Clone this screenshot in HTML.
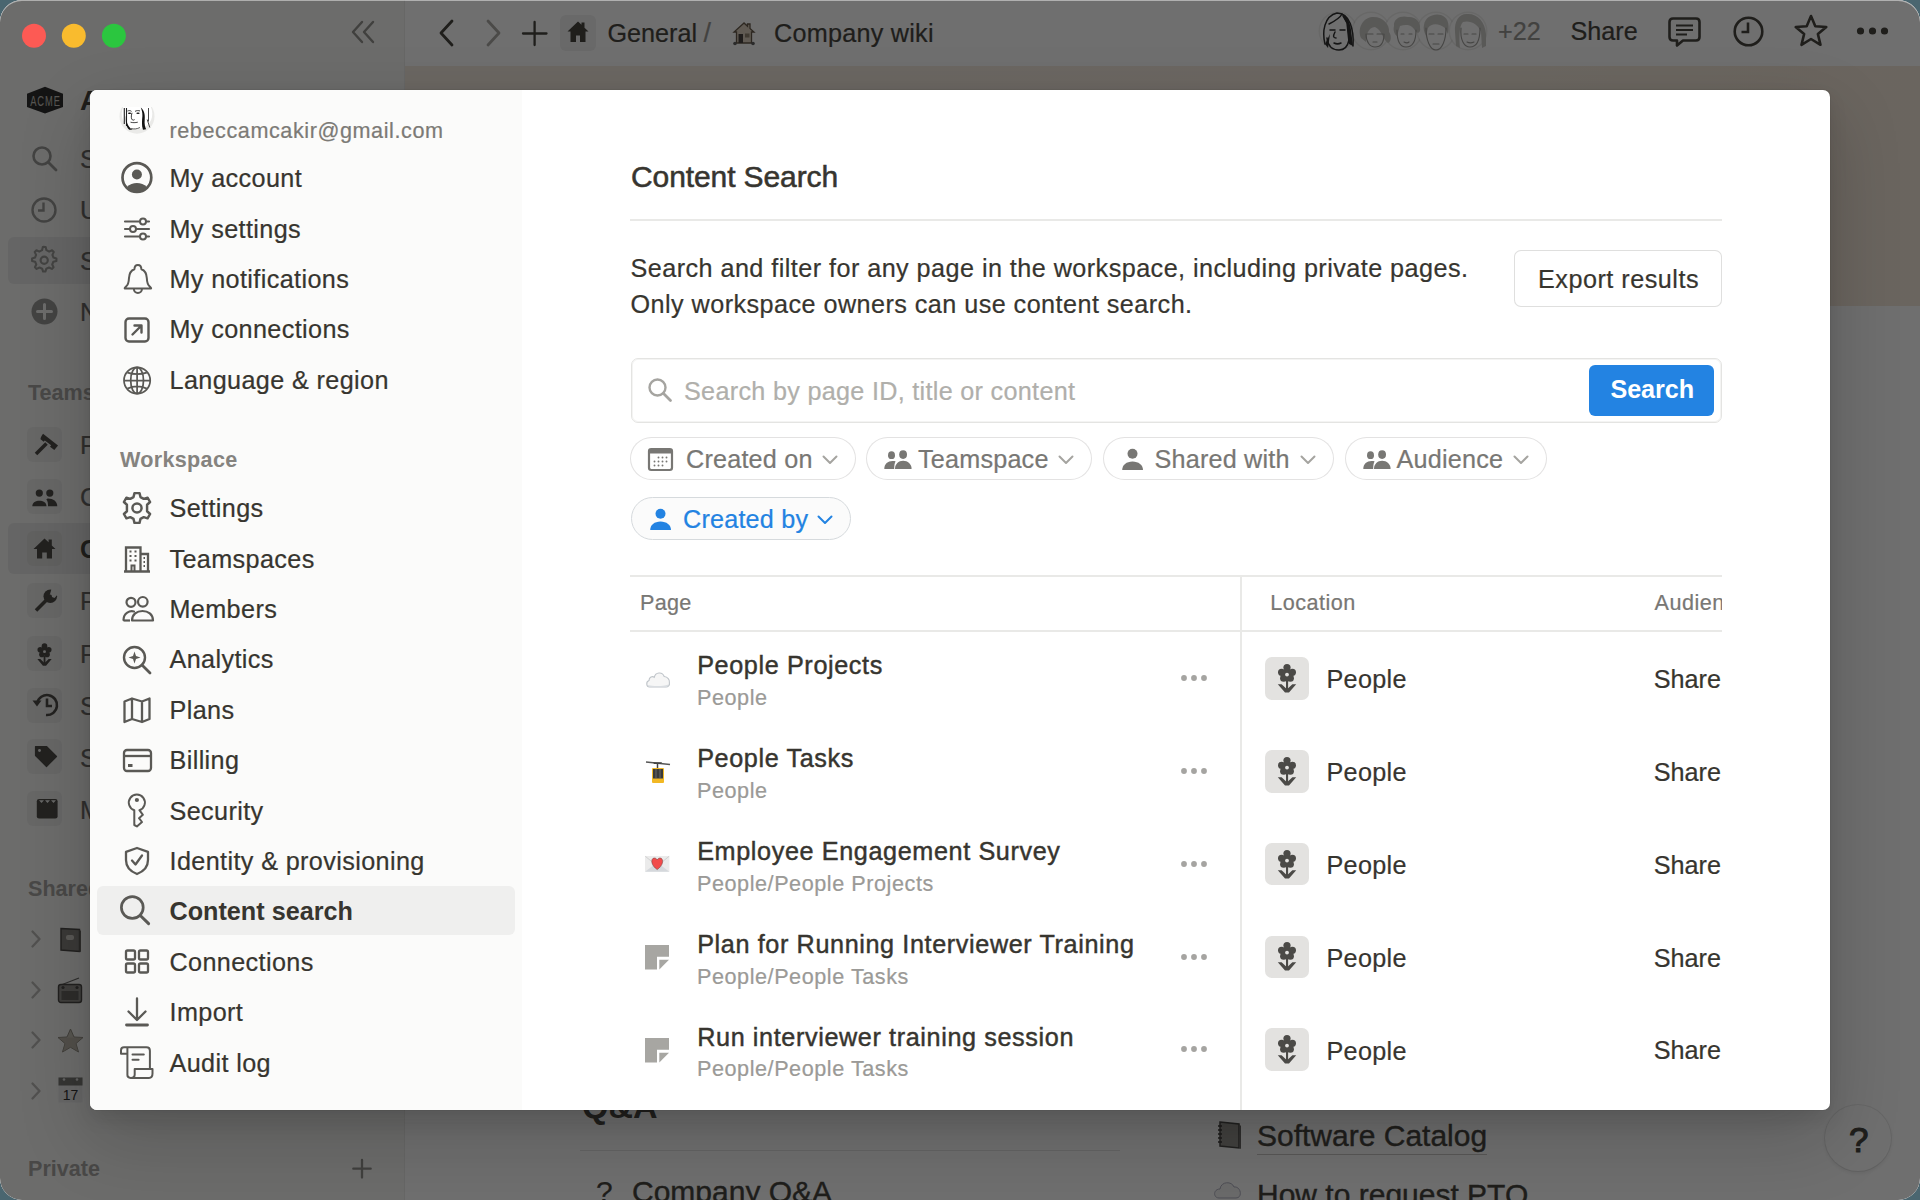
<!DOCTYPE html>
<html><head><meta charset="utf-8"><style>
html,body{margin:0;padding:0;}
body{width:1920px;height:1200px;overflow:hidden;background:#4a6670;font-family:"Liberation Sans", sans-serif;position:relative;}
.t{position:absolute;white-space:nowrap;}
svg{overflow:visible;}
#win{position:absolute;left:0;top:0;width:1920px;height:1200px;border-radius:22px;overflow:hidden;background:#fff;}
#overlay{position:absolute;left:0;top:0;width:1920px;height:1200px;background:rgba(15,15,15,0.6);}
#modal{position:absolute;left:90px;top:90px;width:1740px;height:1020px;border-radius:7px;overflow:hidden;background:#fff;box-shadow:0 0 0 1px rgba(15,15,15,0.05),0 9px 18px rgba(15,15,15,0.1),0 27px 72px rgba(15,15,15,0.2);}
#mside{position:absolute;left:0;top:0;width:432px;height:1020px;background:#fbfbfa;}
#mabs{position:absolute;left:-90px;top:-90px;width:1920px;height:1200px;}
</style></head><body>
<div id="win">
<div style="position:absolute;left:0px;top:0px;width:405px;height:1200px;background:#f7f7f5;box-shadow:inset -1px 0 0 rgba(0,0,0,0.05);"></div>
<div style="position:absolute;left:405px;top:0px;width:1515px;height:1200px;background:#ffffff;"></div>
<div style="position:absolute;left:405px;top:66px;width:1515px;height:240px;background:linear-gradient(90deg,#f5ebdf,#f7ecde 60%,#f3e6d6);"></div>
<svg style="position:absolute;left:348px;top:18px;" width="32" height="28" viewBox="0 0 32 28"><path d="M14 4 L5 14 L14 24 M25 4 L16 14 L25 24" fill="none" stroke="#8a8984" stroke-width="2.4" stroke-linecap="round" stroke-linejoin="round"/></svg>
<svg style="position:absolute;left:434px;top:18px;" width="26" height="30" viewBox="0 0 26 30"><path d="M18 3 L7 15 L18 27" fill="none" stroke="#37352f" stroke-width="2.8" stroke-linecap="round" stroke-linejoin="round"/></svg>
<svg style="position:absolute;left:480px;top:18px;" width="26" height="30" viewBox="0 0 26 30"><path d="M8 3 L19 15 L8 27" fill="none" stroke="#a5a49f" stroke-width="2.8" stroke-linecap="round" stroke-linejoin="round"/></svg>
<svg style="position:absolute;left:520px;top:19px;" width="30" height="30" viewBox="0 0 30 30"><path d="M14.6 3 V26 M3 14.5 H26.5" fill="none" stroke="#37352f" stroke-width="2.3" stroke-linecap="round"/></svg>
<div style="position:absolute;left:560px;top:15px;width:36px;height:36px;background:rgba(55,53,47,0.08);border-radius:6px;"></div>
<svg style="position:absolute;left:566px;top:20px;" width="24" height="24" viewBox="0 0 24 24"><path d="M12 1.5 L1.5 11.5 H4.5 V22 H10 V15.5 H14 V22 H19.5 V11.5 H22.5 L18.5 7.7 V2.5 H15.5 V4.8 Z" fill="#37352f"/></svg>
<div class="t" style="left:607.50px;top:17.75px;font-size:25.2px;line-height:30.24px;color:#37352f;-webkit-text-stroke:0.22px #37352f;">General</div>
<div class="t" style="left:703.50px;top:17.44px;font-size:27px;line-height:32.40px;color:#8f8e8a;-webkit-text-stroke:0.22px #8f8e8a;">/</div>
<svg style="position:absolute;left:732px;top:21px;" width="24" height="25" viewBox="0 0 24 25"><path d="M12 2 L2 11 H4.5 V22 H19.5 V11 H22 L18 7.4 V3 H15.5 V5.2 Z" fill="#d9cbb8" stroke="#5b4d3c" stroke-width="1.3"/><rect x="6.5" y="13" width="4.5" height="9" fill="#3b3430"/><rect x="13" y="12.5" width="4.5" height="4" fill="#8b7b66"/><circle cx="3" cy="22.5" r="1.8" fill="#555"/><circle cx="21" cy="22.5" r="1.8" fill="#555"/></svg>
<div class="t" style="left:774.00px;top:17.75px;font-size:25.2px;line-height:30.24px;color:#37352f;letter-spacing:0.25px;-webkit-text-stroke:0.22px #37352f;">Company wiki</div>
<div style="position:absolute;left:1320px;top:13px;width:36px;height:36px;background:#fff;border-radius:50%;box-shadow:0 0 0 1.5px rgba(55,53,47,0.09);"></div>
<div style="position:absolute;left:1353px;top:13px;width:36px;height:36px;background:#fff;border-radius:50%;box-shadow:0 0 0 1.5px rgba(55,53,47,0.09);"></div>
<div style="position:absolute;left:1385px;top:13px;width:36px;height:36px;background:#fff;border-radius:50%;box-shadow:0 0 0 1.5px rgba(55,53,47,0.09);"></div>
<div style="position:absolute;left:1418px;top:13px;width:36px;height:36px;background:#fff;border-radius:50%;box-shadow:0 0 0 1.5px rgba(55,53,47,0.09);"></div>
<div style="position:absolute;left:1450px;top:13px;width:36px;height:36px;background:#fff;border-radius:50%;box-shadow:0 0 0 1.5px rgba(55,53,47,0.09);"></div>
<svg style="position:absolute;left:1320px;top:10px;" width="172" height="45" viewBox="0 0 172 45">
      <g fill="none" stroke="#1e1e1e" stroke-width="1.5" stroke-linecap="round">
        <path d="M5 34 C2 22 4 6 17 3 C30 3 34 20 33 36"/>
        <path d="M9 14 C13 12 20 8 22 4 M23 6 L27 13 L29 32"/>
        <path d="M7 28 C8 36 12 40 19 40 C25 40 28 35 29 30"/>
        <path d="M10 20 h5 M20 20 h5 M15 22 C13 26 13 28 16 28 M14 33 C16 34 19 34 21 33"/>
      </g>
      <path d="M22 4 C27 6 30 12 31 20 L33 36 L29 34 L27 14 Z" fill="#1e1e1e"/>
      <path d="M5 34 L8 38 L10 24 Z" fill="#1e1e1e"/>
      <g fill="#c9c8c4">
        <path d="M41 28 C37 18 43 8 52 7 C62 6 70 14 69 22 C72 26 71 32 68 33 C63 30 62 20 55 17 C48 17 46 26 46 32 Z"/>
        <path d="M74 16 C73 8 82 5 88 7 C95 6 101 12 100 18 C101 22 98 24 96 22 C92 14 86 14 80 16 L77 26 C74 24 73 20 74 16 Z"/>
        <path d="M104 15 C105 6 115 3 121 5 C127 7 130 12 128 24 L125 18 C120 14 112 12 108 18 L106 26 C104 22 103 18 104 15 Z"/>
        <path d="M135 22 C134 10 140 3 148 4 C158 4 165 12 166 24 L166 36 L162 38 L161 22 C158 14 150 10 143 12 C139 16 139 28 140 38 L136 36 Z"/>
      </g>
      <g fill="none" stroke="#9a9995" stroke-width="1.1" stroke-linecap="round">
        <path d="M46 24 C46 32 50 37 55 37 C61 37 64 32 64 24"/><path d="M47 24 h6 M57 24 h6"/><path d="M53 32 h4"/>
        <path d="M77 20 C77 30 80 37 86 37 C93 37 96 30 96 20"/><path d="M81 24 h3 M89 24 h3 M84 32 C86 33 88 33 89 32"/>
        <path d="M106 18 C106 30 110 40 116 40 C122 40 126 30 126 18"/><path d="M109 24 h5 M118 24 h5 M113 34 h6"/>
        <path d="M141 18 C140 30 144 37 150 37 C157 37 160 30 160 18"/><path d="M144 24 h4 M152 24 h4 M147 32 C149 33 152 33 154 32"/>
      </g></svg>
<div class="t" style="left:1498.00px;top:16.45px;font-size:25.2px;line-height:30.24px;color:#8f8e8a;-webkit-text-stroke:0.22px #8f8e8a;">+22</div>
<div class="t" style="left:1570.50px;top:15.85px;font-size:25.2px;line-height:30.24px;color:#37352f;-webkit-text-stroke:0.22px #37352f;">Share</div>
<svg style="position:absolute;left:1667px;top:15px;" width="36" height="33" viewBox="0 0 36 33"><path d="M6 3.5 H29 Q32.5 3.5 32.5 7 V22 Q32.5 25.5 29 25.5 H16 L10 30.5 V25.5 H6 Q2.5 25.5 2.5 22 V7 Q2.5 3.5 6 3.5 Z" fill="none" stroke="#37352f" stroke-width="2.6" stroke-linejoin="round"/><path d="M9 10.5 H26 M9 15 H26 M9 19.5 H20" stroke="#37352f" stroke-width="2.2"/></svg>
<svg style="position:absolute;left:1732px;top:15px;" width="33" height="33" viewBox="0 0 33 33"><circle cx="16.5" cy="16.5" r="13.8" fill="none" stroke="#37352f" stroke-width="2.6"/><path d="M16 7.5 V17 H9.5" fill="none" stroke="#37352f" stroke-width="2.6"/></svg>
<svg style="position:absolute;left:1793px;top:13px;" width="36" height="34" viewBox="0 0 36 34"><path d="M18 3 L22.3 13.2 L33.3 14 L24.9 21.1 L27.5 31.8 L18 26 L8.5 31.8 L11.1 21.1 L2.7 14 L13.7 13.2 Z" fill="none" stroke="#37352f" stroke-width="2.6" stroke-linejoin="round"/></svg>
<svg style="position:absolute;left:1855px;top:25px;" width="36" height="12" viewBox="0 0 36 12"><circle cx="5.5" cy="6" r="3.6" fill="#37352f"/><circle cx="17.5" cy="6" r="3.6" fill="#37352f"/><circle cx="29.5" cy="6" r="3.6" fill="#37352f"/></svg>
<svg style="position:absolute;left:26px;top:86px;" width="38" height="29" viewBox="0 0 38 29"><path d="M19 0.8 L37 7.7 V21 L19 27.6 L1 21 V7.7 Z" fill="#1c1c1c"/><text x="0" y="0" font-family="Liberation Sans" font-size="15" fill="#c2c0ba" text-anchor="middle" letter-spacing="1.5" transform="translate(19.5,20.3) scale(0.62,1)">ACME</text></svg>
<div class="t" style="left:80.00px;top:83.50px;font-size:28px;line-height:33.60px;color:#37352f;font-weight:700;">Acme Inc.</div>
<svg style="position:absolute;left:30px;top:144px;" width="30" height="30" viewBox="0 0 30 30"><circle cx="12" cy="12" r="8.5" fill="none" stroke="#91918e" stroke-width="2.6"/><path d="M18.5 18.5 L26 26" stroke="#91918e" stroke-width="2.8" stroke-linecap="round"/></svg>
<div class="t" style="left:80.00px;top:144.15px;font-size:25.2px;line-height:30.24px;color:#5f5e5b;-webkit-text-stroke:0.22px #5f5e5b;">Search</div>
<svg style="position:absolute;left:30px;top:196px;" width="28" height="28" viewBox="0 0 28 28"><circle cx="14" cy="14" r="11.5" fill="none" stroke="#91918e" stroke-width="2.4"/><path d="M13.5 6.5 V14.5 H8" fill="none" stroke="#91918e" stroke-width="2.4"/></svg>
<div class="t" style="left:80.00px;top:195.15px;font-size:25.2px;line-height:30.24px;color:#5f5e5b;-webkit-text-stroke:0.22px #5f5e5b;">Updates</div>
<div style="position:absolute;left:8px;top:237px;width:397px;height:47px;background:rgba(55,53,47,0.08);border-radius:6px;"></div>
<svg style="position:absolute;left:30px;top:246px;" width="28" height="28" viewBox="0 0 28 28"><path d="M14 3 L16.5 3.2 L17.3 6.5 L20.2 8 L23.2 6.6 L25 8.5 L23.6 11.5 L24.7 14.3 L27.8 15.3 L27.8 17.8 L24.6 18.7 L23.4 21.5 L24.8 24.4 L23 26.2 L20 24.8 L17.2 26 L16.2 29 H13.8 L12.8 26 L10 24.8 L7 26.2 L5.2 24.4 L6.6 21.5 L5.4 18.7 L2.2 17.8 V15.3 L5.3 14.3 L6.4 11.5 L5 8.5 L6.8 6.6 L9.8 8 L12.7 6.5 L13.5 3.2 Z" transform="translate(0,-2) scale(0.95)" fill="none" stroke="#91918e" stroke-width="2.2" stroke-linejoin="round"/><circle cx="14.2" cy="14.2" r="3.6" fill="none" stroke="#91918e" stroke-width="2.2"/></svg>
<div class="t" style="left:80.00px;top:246.15px;font-size:25.2px;line-height:30.24px;color:#5f5e5b;-webkit-text-stroke:0.22px #5f5e5b;">Settings &amp; members</div>
<svg style="position:absolute;left:31px;top:298px;" width="27" height="27" viewBox="0 0 27 27"><circle cx="13.5" cy="13.5" r="13" fill="#91918e"/><path d="M13.5 6.5 V20.5 M6.5 13.5 H20.5" stroke="#f7f7f5" stroke-width="3" stroke-linecap="round"/></svg>
<div class="t" style="left:80.00px;top:297.15px;font-size:25.2px;line-height:30.24px;color:#5f5e5b;-webkit-text-stroke:0.22px #5f5e5b;">New page</div>
<div class="t" style="left:28.00px;top:379.96px;font-size:21.6px;line-height:25.92px;color:#a09f9b;font-weight:700;">Teamspaces</div>
<div style="position:absolute;left:8px;top:523px;width:397px;height:51px;background:rgba(55,53,47,0.08);border-radius:6px;"></div>
<div style="position:absolute;left:27.3px;top:426.5px;width:35px;height:35px;background:rgba(55,53,47,0.06);border-radius:6px;"></div>
<svg style="position:absolute;left:27.3px;top:426.5px;" width="35" height="35" viewBox="0 0 35 35"><path d="M9 27 L19.5 16.5" stroke="#3f3d39" stroke-width="3.6"/><g transform="rotate(38 22 14.5)"><path d="M12.5 12 H31.5 V18 H26 V16.2 H18 V18 H14 Q12.5 16.5 12.5 12 Z" fill="#3f3d39"/></g></svg>
<div class="t" style="left:80.00px;top:429.65px;font-size:25.2px;line-height:30.24px;color:#5f5e5b;-webkit-text-stroke:0.22px #5f5e5b;">Product</div>
<div style="position:absolute;left:27.3px;top:478.6px;width:35px;height:35px;background:rgba(55,53,47,0.06);border-radius:6px;"></div>
<svg style="position:absolute;left:27.3px;top:478.6px;" width="35" height="35" viewBox="0 0 35 35"><circle cx="12.3" cy="14.1" r="3.6" fill="#3f3d39"/><circle cx="22.8" cy="14.1" r="3.6" fill="#3f3d39"/><path d="M5.3 27.2 C5.3 20 19.5 20 19.5 27.2 Z" fill="#3f3d39"/><path d="M20.6 19.6 C26 19.4 30.3 22.5 30.3 27.2 H21 C21 24 20.8 22 19.3 20.6 Z" fill="#3f3d39"/></svg>
<div class="t" style="left:80.00px;top:481.75px;font-size:25.2px;line-height:30.24px;color:#5f5e5b;-webkit-text-stroke:0.22px #5f5e5b;">Company</div>
<div style="position:absolute;left:27.3px;top:530.7px;width:35px;height:35px;background:rgba(55,53,47,0.06);border-radius:6px;"></div>
<svg style="position:absolute;left:27.3px;top:530.7px;" width="35" height="35" viewBox="0 0 35 35"><path d="M17.5 7.5 L6.5 18 H10 V27.5 H15.2 V21.5 H19.8 V27.5 H25 V18 H28.5 L24.8 14.4 V8.5 H21.6 V11.3 Z" fill="#3f3d39"/></svg>
<div class="t" style="left:80.00px;top:533.85px;font-size:25.2px;line-height:30.24px;color:#37352f;font-weight:700;">General</div>
<div style="position:absolute;left:27.3px;top:583.3px;width:35px;height:35px;background:rgba(55,53,47,0.06);border-radius:6px;"></div>
<svg style="position:absolute;left:27.3px;top:583.3px;" width="35" height="35" viewBox="0 0 35 35"><path d="M9 27.5 L19.5 17" stroke="#3f3d39" stroke-width="3.6"/><circle cx="23.3" cy="13.2" r="6.8" fill="#3f3d39"/><path d="M22.5 13 L25 4 L33 9 L27.5 15 Z" fill="#ebebe9"/><circle cx="23.3" cy="13.2" r="1.6" fill="#3f3d39"/></svg>
<div class="t" style="left:80.00px;top:586.45px;font-size:25.2px;line-height:30.24px;color:#5f5e5b;-webkit-text-stroke:0.22px #5f5e5b;">Platform</div>
<div style="position:absolute;left:27.3px;top:635.6px;width:35px;height:35px;background:rgba(55,53,47,0.06);border-radius:6px;"></div>
<svg style="position:absolute;left:27.3px;top:635.6px;" width="35" height="35" viewBox="0 0 35 35"><g transform="translate(17.5 17.5) scale(0.78) translate(-25 -22)"><circle cx="25" cy="19" r="5.2" fill="#3f3d39"/><circle cx="25" cy="12.6" r="3.6" fill="#3f3d39"/><circle cx="19.6" cy="17.3" r="3.6" fill="#3f3d39"/><circle cx="30.4" cy="17.3" r="3.6" fill="#3f3d39"/><circle cx="21.7" cy="23.2" r="3.6" fill="#3f3d39"/><circle cx="28.3" cy="23.2" r="3.6" fill="#3f3d39"/><circle cx="25" cy="19.6" r="1.9" fill="#ebebe9"/><rect x="23.9" y="25" width="2.3" height="11" fill="#3f3d39"/><path d="M15.8 29.2 H19.6 L25 34.3 L30.4 29.2 H34.2 L27 37.6 H23 Z" fill="#3f3d39"/></g></svg>
<div class="t" style="left:80.00px;top:638.75px;font-size:25.2px;line-height:30.24px;color:#5f5e5b;-webkit-text-stroke:0.22px #5f5e5b;">People</div>
<div style="position:absolute;left:27.3px;top:687.5px;width:35px;height:35px;background:rgba(55,53,47,0.06);border-radius:6px;"></div>
<svg style="position:absolute;left:27.3px;top:687.5px;" width="35" height="35" viewBox="0 0 35 35"><path d="M10.2 15 A10 10 0 1 1 19 27" fill="none" stroke="#3f3d39" stroke-width="2.6"/><path d="M5.5 12.5 H14.5 L10 18.5 Z" fill="#3f3d39"/><path d="M20 10.5 V18 H25" fill="none" stroke="#3f3d39" stroke-width="2.6"/></svg>
<div class="t" style="left:80.00px;top:690.65px;font-size:25.2px;line-height:30.24px;color:#5f5e5b;-webkit-text-stroke:0.22px #5f5e5b;">Support</div>
<div style="position:absolute;left:27.3px;top:739.4px;width:35px;height:35px;background:rgba(55,53,47,0.06);border-radius:6px;"></div>
<svg style="position:absolute;left:27.3px;top:739.4px;" width="35" height="35" viewBox="0 0 35 35"><path d="M8.5 7.5 H19.5 L29.5 17.5 L19.5 27.5 L8.5 16.5 Z" fill="#3f3d39" stroke="#3f3d39" stroke-width="1.2" stroke-linejoin="round"/><circle cx="12.5" cy="11.5" r="1.4" fill="#ebebe9"/></svg>
<div class="t" style="left:80.00px;top:742.55px;font-size:25.2px;line-height:30.24px;color:#5f5e5b;-webkit-text-stroke:0.22px #5f5e5b;">Sales</div>
<div style="position:absolute;left:27.3px;top:791.4px;width:35px;height:35px;background:rgba(55,53,47,0.06);border-radius:6px;"></div>
<svg style="position:absolute;left:27.3px;top:791.4px;" width="35" height="35" viewBox="0 0 35 35"><rect x="9.8" y="8" width="20.8" height="19.5" rx="2.2" fill="#3f3d39"/><path d="M12 9.2 L14.5 12 L17 9.2 Z M18 9.2 L20.5 12 L23 9.2 Z M24 9.2 L26.5 12 L29 9.2 Z" fill="#ebebe9"/></svg>
<div class="t" style="left:80.00px;top:794.55px;font-size:25.2px;line-height:30.24px;color:#5f5e5b;-webkit-text-stroke:0.22px #5f5e5b;">Media</div>
<div class="t" style="left:28.00px;top:876.36px;font-size:21.6px;line-height:25.92px;color:#a09f9b;font-weight:700;">Shared</div>
<svg style="position:absolute;left:30px;top:930.2px;" width="12" height="18" viewBox="0 0 12 18"><path d="M2.5 1.5 L9.5 9 L2.5 16.5" fill="none" stroke="#b3b2ae" stroke-width="2.3" stroke-linecap="round" stroke-linejoin="round"/></svg>
<svg style="position:absolute;left:30px;top:980.8px;" width="12" height="18" viewBox="0 0 12 18"><path d="M2.5 1.5 L9.5 9 L2.5 16.5" fill="none" stroke="#b3b2ae" stroke-width="2.3" stroke-linecap="round" stroke-linejoin="round"/></svg>
<svg style="position:absolute;left:30px;top:1031px;" width="12" height="18" viewBox="0 0 12 18"><path d="M2.5 1.5 L9.5 9 L2.5 16.5" fill="none" stroke="#b3b2ae" stroke-width="2.3" stroke-linecap="round" stroke-linejoin="round"/></svg>
<svg style="position:absolute;left:30px;top:1081.5px;" width="12" height="18" viewBox="0 0 12 18"><path d="M2.5 1.5 L9.5 9 L2.5 16.5" fill="none" stroke="#b3b2ae" stroke-width="2.3" stroke-linecap="round" stroke-linejoin="round"/></svg>
<svg style="position:absolute;left:60px;top:927px;" width="22" height="26" viewBox="0 0 22 26"><path d="M1 1.5 L19.5 2.5 V24.5 L1 23 Z" fill="#7a7873" stroke="#3c3a37" stroke-width="1.4"/><path d="M19.5 2.5 L21 4 V25 L19.5 24.5" fill="#5a5853"/><rect x="6" y="8" width="8" height="5" rx="2" fill="#c9c6be"/></svg>
<svg style="position:absolute;left:57px;top:977px;" width="26" height="27" viewBox="0 0 26 27"><path d="M4 8 L22 1" stroke="#5b5a56" stroke-width="1.2"/><rect x="1.5" y="7.5" width="23" height="18" rx="2.5" fill="#8a8883" stroke="#3c3a37" stroke-width="1.4"/><rect x="4.5" y="14" width="17" height="9" fill="#5a5853"/><circle cx="6" cy="10.5" r="1.6" fill="#3c3a37"/><circle cx="20" cy="10.5" r="1.6" fill="#3c3a37"/></svg>
<svg style="position:absolute;left:57px;top:1028px;" width="27" height="25" viewBox="0 0 27 25"><path d="M13.5 1 L17 9 L26 9.5 L19 15.5 L21.5 24 L13.5 19.3 L5.5 24 L8 15.5 L1 9.5 L10 9 Z" fill="#c4bfb2" stroke="#8a857a" stroke-width="1"/><path d="M1 9.5 L8 15.5 L5.5 24 L13.5 19.3 L21.5 24 L19 15.5 L26 9.5 Z" fill="#a7a194" opacity="0.5"/></svg>
<svg style="position:absolute;left:58px;top:1077px;" width="25" height="26" viewBox="0 0 25 26"><rect x="0.5" y="0.5" width="24" height="25" fill="#e9e9e9"/><rect x="0.5" y="0.5" width="24" height="8" fill="#6f6e6a"/><circle cx="6" cy="2.5" r="1.3" fill="#ddd"/><circle cx="19" cy="2.5" r="1.3" fill="#ddd"/><text x="12.5" y="23" font-family="Liberation Sans" font-size="14" fill="#222" text-anchor="middle">17</text></svg>
<div class="t" style="left:28.00px;top:1155.56px;font-size:21.6px;line-height:25.92px;color:#a09f9b;font-weight:700;">Private</div>
<svg style="position:absolute;left:352px;top:1159px;" width="20" height="20" viewBox="0 0 20 20"><path d="M10 1 V18.5 M1.3 9.7 H18.7" stroke="#8a8985" stroke-width="2.3" stroke-linecap="round"/></svg>
<div class="t" style="left:582.00px;top:1085.82px;font-size:34px;line-height:40.80px;color:#37352f;font-weight:700;">Q&amp;A</div>
<div style="position:absolute;left:580px;top:1150px;width:540px;height:1px;background:#e3e2e0;"></div>
<div class="t" style="left:596.00px;top:1173.61px;font-size:30px;line-height:36.00px;color:#37352f;-webkit-text-stroke:0.22px #37352f;">?</div>
<div class="t" style="left:632.00px;top:1173.61px;font-size:30px;line-height:36.00px;color:#37352f;-webkit-text-stroke:0.4px #37352f;">Company Q&amp;A</div>
<svg style="position:absolute;left:1215px;top:1120px;" width="28" height="30" viewBox="0 0 28 30"><path d="M5 2 L24 4 V28 L5 26 Z" fill="#8d8a84" stroke="#3a3936" stroke-width="1.5"/><path d="M24 4 L26 6 V29 L24 28" fill="#5d5b57"/><path d="M3 6 h4 M3 10 h4 M3 14 h4 M3 18 h4 M3 22 h4" stroke="#2e2d2a" stroke-width="1.3"/></svg>
<div class="t" style="left:1257.00px;top:1117.61px;font-size:30px;line-height:36.00px;color:#37352f;-webkit-text-stroke:0.4px #37352f;border-bottom:1.5px solid #c7c6c3;">Software Catalog</div>
<svg style="position:absolute;left:1213px;top:1178px;" width="30" height="22" viewBox="0 0 30 22"><path d="M6 20 C0 20 0 11 7 11 C8 3 19 3 21 9 C28 8 30 20 23 20 Z" fill="#f2f2f2" stroke="#aab" stroke-width="1"/></svg>
<div class="t" style="left:1257.00px;top:1176.61px;font-size:30px;line-height:36.00px;color:#37352f;-webkit-text-stroke:0.4px #37352f;">How to request PTO</div>
<div style="position:absolute;left:1825px;top:1105px;width:66px;height:66px;background:#fff;border-radius:50%;box-shadow:0 0 0 1px rgba(15,15,15,0.08),0 2px 4px rgba(15,15,15,0.1);"></div>
<div class="t" style="left:1849.00px;top:1119.17px;font-size:35px;line-height:42.00px;color:#37352f;-webkit-text-stroke:1.1px #37352f;">?</div>

<div id="overlay"></div>
<svg style="position:absolute;left:0;top:0" width="140" height="60"><circle cx="34" cy="35.7" r="12" fill="#fd5a54"/><circle cx="73.8" cy="35.7" r="12" fill="#f9bb2e"/><circle cx="113.9" cy="35.7" r="12" fill="#2bc63f"/></svg>
<div id="modal"><div id="mside"></div><div id="mabs">
<div style="position:absolute;left:115px;top:107px;width:45px;height:35px;overflow:hidden;"><svg style="position:absolute;left:0px;top:-5px;" width="45" height="40" viewBox="0 0 45 40"><circle cx="22" cy="14.2" r="17.5" fill="rgba(55,53,47,0.085)"/><circle cx="22" cy="11.8" r="15.3" fill="#fff"/>
      <path d="M9.3 6 V22 M11.5 6 V24" stroke="#222" stroke-width="1.1"/>
      <path d="M11 13 C11 20 13 25 17.5 27.8 L14.3 27.8 C11.3 25 10.3 21 11 13 Z" fill="#111"/>
      <path d="M12.5 9 C14 8.4 15.5 8.5 16.5 9.4 M20 9.4 C21.5 8.4 23.5 8.4 25 9" fill="none" stroke="#222" stroke-width="0.9"/>
      <ellipse cx="14.6" cy="11.3" rx="1.7" ry="0.8" fill="#111"/><ellipse cx="23" cy="11.3" rx="1.7" ry="0.8" fill="#111"/>
      <path d="M17 10.8 C16 14 16 17 17.5 18 C18 18.3 19 18.1 19.6 17.6" fill="none" stroke="#222" stroke-width="0.9"/>
      <path d="M15.5 20.2 C17.5 20.8 20.5 20.8 22.8 20.2" fill="none" stroke="#333" stroke-width="0.9"/>
      <path d="M16 26.6 C19 27.3 22 27 25 25.5" fill="none" stroke="#333" stroke-width="0.8"/>
      <path d="M25.8 5.5 C29 8 30.2 12 29.7 18 C29.3 22 30 25 31.2 27.3 L28 27.8 C26.5 24 27 18 27.4 14 C27.6 10 26.6 8 25.8 5.5 Z" fill="#111"/>
      <path d="M33.5 6 V19.5 M32.2 17.5 L34.8 25.5" stroke="#333" stroke-width="0.9"/></svg>
</div>
<div class="t" style="left:169.50px;top:117.56px;font-size:21.6px;line-height:25.92px;color:#7c7a76;letter-spacing:0.58px;-webkit-text-stroke:0.22px #7c7a76;">rebeccamcakir@gmail.com</div>
<svg style="position:absolute;left:121px;top:162.4px;" width="32" height="32" viewBox="0 0 32 32"><circle cx="15.9" cy="15.5" r="14.4" fill="none" stroke="#5a5955" stroke-width="2.7"/><circle cx="15.9" cy="12.5" r="5" fill="#5a5955"/><path d="M5.8 25.2 C8.5 22 12.3 21 15.9 21 C19.5 21 23.3 22 26 25.2 C23.4 28 19.8 29.8 15.9 29.8 C12 29.8 8.4 28 5.8 25.2 Z" fill="#5a5955"/></svg>
<div class="t" style="left:169.50px;top:163.25px;font-size:25.2px;line-height:30.24px;color:#37352f;letter-spacing:0.38px;-webkit-text-stroke:0.22px #37352f;">My account</div>
<svg style="position:absolute;left:121px;top:212.8px;" width="32" height="32" viewBox="0 0 32 32"><path d="M4 8.5 H28 M4 16 H28 M4 23.5 H28" stroke="#5a5955" stroke-width="2.2" stroke-linecap="round"/><circle cx="22" cy="8.5" r="3" fill="#fbfbfa" stroke="#5a5955" stroke-width="2"/><circle cx="12" cy="16" r="3" fill="#fbfbfa" stroke="#5a5955" stroke-width="2"/><circle cx="22" cy="23.5" r="3" fill="#fbfbfa" stroke="#5a5955" stroke-width="2"/></svg>
<div class="t" style="left:169.50px;top:213.65px;font-size:25.2px;line-height:30.24px;color:#37352f;letter-spacing:0.38px;-webkit-text-stroke:0.22px #37352f;">My settings</div>
<svg style="position:absolute;left:121px;top:263.2px;" width="32" height="32" viewBox="0 0 32 32"><path d="M13.4 6.3 C13.5 3.3 15 1.9 16.9 1.9 C18.8 1.9 20.3 3.3 20.4 6.3 C24 7.6 25.5 10.2 25.8 15 C26 19 26.5 21.5 28.5 23.3 C30.7 25.2 30.4 25.6 29.3 25.6 H4.5 C3.4 25.6 3.1 25.2 5.3 23.3 C7.3 21.5 7.8 19 8 15 C8.3 10.2 9.8 7.6 13.4 6.3 Z" fill="none" stroke="#5a5955" stroke-width="2" stroke-linejoin="round"/><path d="M12.9 25.9 A4 4 0 0 0 20.9 25.9" fill="none" stroke="#5a5955" stroke-width="2"/></svg>
<div class="t" style="left:169.50px;top:264.05px;font-size:25.2px;line-height:30.24px;color:#37352f;letter-spacing:0.38px;-webkit-text-stroke:0.22px #37352f;">My notifications</div>
<svg style="position:absolute;left:121px;top:313.6px;" width="32" height="32" viewBox="0 0 32 32"><rect x="4.5" y="4.5" width="23" height="23" rx="3.5" fill="none" stroke="#5a5955" stroke-width="2.4"/><path d="M11.5 20.5 L20.5 11.5 M13.5 11.5 H20.5 V18.5" fill="none" stroke="#5a5955" stroke-width="2.4" stroke-linecap="round" stroke-linejoin="round"/></svg>
<div class="t" style="left:169.50px;top:314.45px;font-size:25.2px;line-height:30.24px;color:#37352f;letter-spacing:0.38px;-webkit-text-stroke:0.22px #37352f;">My connections</div>
<svg style="position:absolute;left:121px;top:364.0px;" width="32" height="32" viewBox="0 0 32 32"><circle cx="16.1" cy="16.5" r="13.1" fill="none" stroke="#5a5955" stroke-width="1.75"/><ellipse cx="16.1" cy="16.5" rx="6.4" ry="13.1" fill="none" stroke="#5a5955" stroke-width="1.75"/><path d="M16.1 3.4 V29.6 M3 16.5 H29.2 M6.4 8.6 Q16.1 11.6 25.8 8.6 M6.4 24.6 Q16.1 20.3 25.8 24.6" fill="none" stroke="#5a5955" stroke-width="1.75"/></svg>
<div class="t" style="left:169.50px;top:364.85px;font-size:25.2px;line-height:30.24px;color:#37352f;letter-spacing:0.38px;-webkit-text-stroke:0.22px #37352f;">Language &amp; region</div>
<div class="t" style="left:120.00px;top:446.86px;font-size:21.6px;line-height:25.92px;color:#85837f;font-weight:700;letter-spacing:0.3px;">Workspace</div>
<svg style="position:absolute;left:121px;top:492.4px;" width="32" height="32" viewBox="0 0 32 32"><g transform="translate(16 16) scale(1.2) translate(-16 -16)"><path d="M13.9 3.6 H18.1 L18.9 6.9 L21.6 8.4 L24.8 7.4 L26.9 11 L24.4 13.3 V18.7 L26.9 21 L24.8 24.6 L21.6 23.6 L18.9 25.1 L18.1 28.4 H13.9 L13.1 25.1 L10.4 23.6 L7.2 24.6 L5.1 21 L7.6 18.7 V13.3 L5.1 11 L7.2 7.4 L10.4 8.4 L13.1 6.9 Z" fill="none" stroke="#5a5955" stroke-width="2.05" stroke-linejoin="round"/><circle cx="16" cy="16" r="3.8" fill="none" stroke="#5a5955" stroke-width="2.05"/></g></svg>
<div class="t" style="left:169.50px;top:493.25px;font-size:25.2px;line-height:30.24px;color:#37352f;letter-spacing:0.38px;-webkit-text-stroke:0.22px #37352f;">Settings</div>
<svg style="position:absolute;left:121px;top:542.8px;" width="32" height="32" viewBox="0 0 32 32"><path d="M5 28 V4.5 H19.5 V28 M19.5 11 H27 V28 M3 28.5 H29" fill="none" stroke="#5a5955" stroke-width="2.3"/><path d="M8.5 8.5 H10.5 M13.5 8.5 H15.5 M8.5 13 H10.5 M13.5 13 H15.5 M8.5 17.5 H10.5 M13.5 17.5 H15.5 M22.5 15 H24 M22.5 19 H24 M22.5 23 H24" stroke="#5a5955" stroke-width="2.2"/><path d="M10.5 28 V22.5 H13.5 V28" fill="none" stroke="#5a5955" stroke-width="2"/></svg>
<div class="t" style="left:169.50px;top:543.65px;font-size:25.2px;line-height:30.24px;color:#37352f;letter-spacing:0.38px;-webkit-text-stroke:0.22px #37352f;">Teamspaces</div>
<svg style="position:absolute;left:121px;top:593.2px;" width="32" height="32" viewBox="0 0 32 32"><circle cx="10" cy="9.3" r="4.5" fill="none" stroke="#5a5955" stroke-width="2.2"/><circle cx="21.8" cy="8.8" r="4.8" fill="none" stroke="#5a5955" stroke-width="2.2"/><path d="M2.5 27 C2.5 19.5 9 17.5 13 18.5" fill="none" stroke="#5a5955" stroke-width="2.2" stroke-linecap="round"/><path d="M11 27.5 C11 21 16 18 21.5 18 C27 18 32 21 32 27.5 Z" fill="none" stroke="#5a5955" stroke-width="2.2" stroke-linejoin="round"/><path d="M2.5 27.5 H9" stroke="#5a5955" stroke-width="2.2"/></svg>
<div class="t" style="left:169.50px;top:594.05px;font-size:25.2px;line-height:30.24px;color:#37352f;letter-spacing:0.38px;-webkit-text-stroke:0.22px #37352f;">Members</div>
<svg style="position:absolute;left:121px;top:643.6px;" width="32" height="32" viewBox="0 0 32 32"><circle cx="13.5" cy="13.5" r="10.5" fill="none" stroke="#5a5955" stroke-width="2.4"/><path d="M21 21 L29 29" stroke="#5a5955" stroke-width="2.8" stroke-linecap="round"/><path d="M13.5 7.5 L15 12 L19.5 13.5 L15 15 L13.5 19.5 L12 15 L7.5 13.5 L12 12 Z" fill="#5a5955"/></svg>
<div class="t" style="left:169.50px;top:644.45px;font-size:25.2px;line-height:30.24px;color:#37352f;letter-spacing:0.38px;-webkit-text-stroke:0.22px #37352f;">Analytics</div>
<svg style="position:absolute;left:121px;top:694.0px;" width="32" height="32" viewBox="0 0 32 32"><path d="M3.5 7.5 L11 4.5 L21 7.5 L28.5 4.5 V25 L21 28 L11 25 L3.5 28 Z M11 4.5 V25 M21 7.5 V28" fill="none" stroke="#5a5955" stroke-width="2.3" stroke-linejoin="round"/></svg>
<div class="t" style="left:169.50px;top:694.85px;font-size:25.2px;line-height:30.24px;color:#37352f;letter-spacing:0.38px;-webkit-text-stroke:0.22px #37352f;">Plans</div>
<svg style="position:absolute;left:121px;top:744.4px;" width="32" height="32" viewBox="0 0 32 32"><rect x="3" y="6" width="27" height="21" rx="3" fill="none" stroke="#5a5955" stroke-width="2.3"/><path d="M3 12 H30" stroke="#5a5955" stroke-width="2.3"/><rect x="7" y="20" width="4.5" height="3" fill="#5a5955"/></svg>
<div class="t" style="left:169.50px;top:745.25px;font-size:25.2px;line-height:30.24px;color:#37352f;letter-spacing:0.38px;-webkit-text-stroke:0.22px #37352f;">Billing</div>
<svg style="position:absolute;left:121px;top:794.8px;" width="32" height="32" viewBox="0 0 32 32"><path d="M13.3 15.2 A8.05 8.05 0 1 1 18.4 15.2 L21.9 19.8 L18 23.2 L21 27 L15.9 31.4 L13.3 30 Z" fill="none" stroke="#5a5955" stroke-width="2" stroke-linejoin="round"/><circle cx="15.9" cy="5" r="2.1" fill="#5a5955"/></svg>
<div class="t" style="left:169.50px;top:795.65px;font-size:25.2px;line-height:30.24px;color:#37352f;letter-spacing:0.38px;-webkit-text-stroke:0.22px #37352f;">Security</div>
<svg style="position:absolute;left:121px;top:845.2px;" width="32" height="32" viewBox="0 0 32 32"><path d="M16 3 L27 6.8 V15 C27 21.5 22.5 26.5 16 29 C9.5 26.5 5 21.5 5 15 V6.8 Z" fill="none" stroke="#5a5955" stroke-width="2.3" stroke-linejoin="round"/><path d="M11 15.5 L14.5 19.5 L21 10.5" fill="none" stroke="#5a5955" stroke-width="2.3" stroke-linecap="round" stroke-linejoin="round"/></svg>
<div class="t" style="left:169.50px;top:846.05px;font-size:25.2px;line-height:30.24px;color:#37352f;letter-spacing:0.38px;-webkit-text-stroke:0.22px #37352f;">Identity &amp; provisioning</div>
<div style="position:absolute;left:97px;top:886.3px;width:418px;height:48.8px;background:rgba(55,53,47,0.06);border-radius:6px;"></div>
<svg style="position:absolute;left:121px;top:895.6px;" width="32" height="32" viewBox="0 0 32 32"><circle cx="11.3" cy="11.5" r="10.9" fill="none" stroke="#5a5955" stroke-width="2.7"/><path d="M19.3 19.5 L27.6 27.6" stroke="#5a5955" stroke-width="3" stroke-linecap="round"/></svg>
<div class="t" style="left:169.50px;top:896.45px;font-size:25.2px;line-height:30.24px;color:#37352f;font-weight:700;">Content search</div>
<svg style="position:absolute;left:121px;top:946.0px;" width="32" height="32" viewBox="0 0 32 32"><rect x="5" y="4.5" width="9" height="9" rx="1.5" fill="none" stroke="#5a5955" stroke-width="2.3"/><rect x="18" y="4.5" width="9" height="9" rx="1.5" fill="none" stroke="#5a5955" stroke-width="2.3"/><rect x="5" y="17.5" width="9" height="9" rx="1.5" fill="none" stroke="#5a5955" stroke-width="2.3"/><rect x="18" y="17.5" width="9" height="9" rx="1.5" fill="none" stroke="#5a5955" stroke-width="2.3"/></svg>
<div class="t" style="left:169.50px;top:946.85px;font-size:25.2px;line-height:30.24px;color:#37352f;letter-spacing:0.38px;-webkit-text-stroke:0.22px #37352f;">Connections</div>
<svg style="position:absolute;left:121px;top:996.4px;" width="32" height="32" viewBox="0 0 32 32"><path d="M16 2.5 V24 M7.5 15.5 L16 24 L24.5 15.5" fill="none" stroke="#5a5955" stroke-width="2.3" stroke-linecap="round" stroke-linejoin="round"/><path d="M5.5 29 H26.5" stroke="#5a5955" stroke-width="2.8" stroke-linecap="round"/></svg>
<div class="t" style="left:169.50px;top:997.25px;font-size:25.2px;line-height:30.24px;color:#37352f;letter-spacing:0.38px;-webkit-text-stroke:0.22px #37352f;">Import</div>
<svg style="position:absolute;left:121px;top:1046.8px;" width="32" height="32" viewBox="0 0 32 32"><path d="M3 0.35 H25.4 Q28.9 0.35 28.9 3.8 V22.1 M6.4 0.35 H3 Q0 0.35 0 3.5 V6.7 H6.4 M6.4 0.35 V28.1 Q6.4 30.9 9.6 30.9 H28 Q31.5 30.9 31.5 26.5 V22.1 H13.7 V27.5 Q13.7 30.9 10 30.9 M11.5 7.4 H22.8 M11.5 12.7 H17.6" fill="none" stroke="#5a5955" stroke-width="2" stroke-linecap="round" stroke-linejoin="round"/></svg>
<div class="t" style="left:169.50px;top:1047.65px;font-size:25.2px;line-height:30.24px;color:#37352f;letter-spacing:0.38px;-webkit-text-stroke:0.22px #37352f;">Audit log</div>

<div class="t" style="left:631.00px;top:158.85px;font-size:30px;line-height:36.00px;color:#37352f;letter-spacing:-0.1px;-webkit-text-stroke:0.55px #37352f;">Content Search</div>
<div style="position:absolute;left:630px;top:218.5px;width:1092px;height:2px;background:#e9e9e7;"></div>
<div class="t" style="left:630.50px;top:252.75px;font-size:25.2px;line-height:30.24px;color:#37352f;letter-spacing:0.45px;-webkit-text-stroke:0.22px #37352f;">Search and filter for any page in the workspace, including private pages.</div>
<div class="t" style="left:630.50px;top:288.95px;font-size:25.2px;line-height:30.24px;color:#37352f;letter-spacing:0.45px;-webkit-text-stroke:0.22px #37352f;">Only workspace owners can use content search.</div>
<div style="position:absolute;left:1514px;top:250px;width:208px;height:57px;box-sizing:border-box;border:1.8px solid rgba(55,53,47,0.16);border-radius:7px;background:#fff;"></div>
<div class="t" style="left:1538.00px;top:263.85px;font-size:25.2px;line-height:30.24px;color:#37352f;letter-spacing:0.5px;-webkit-text-stroke:0.22px #37352f;">Export results</div>
<div style="position:absolute;left:630.5px;top:358px;width:1091px;height:64.5px;box-sizing:border-box;border:1.8px solid #e4e4e2;border-radius:7px;background:#fff;box-shadow:inset 0 0 0 1px #f4f4f3;"></div>
<svg style="position:absolute;left:647px;top:377px;" width="26" height="26" viewBox="0 0 26 26"><circle cx="10.5" cy="10.5" r="8" fill="none" stroke="#a5a4a0" stroke-width="2.4"/><path d="M16.5 16.5 L23.5 23.5" stroke="#a5a4a0" stroke-width="2.8" stroke-linecap="round"/></svg>
<div class="t" style="left:684.00px;top:376.15px;font-size:25.2px;line-height:30.24px;color:#b0afab;letter-spacing:0.3px;-webkit-text-stroke:0.22px #b0afab;">Search by page ID, title or content</div>
<div style="position:absolute;left:1589px;top:365px;width:125px;height:50.5px;background:#2383e2;border-radius:6px;"></div>
<div class="t" style="left:1610.50px;top:374.15px;font-size:25.2px;line-height:30.24px;color:#fff;font-weight:700;letter-spacing:-0.1px;">Search</div>
<div style="position:absolute;left:630.3px;top:436.8px;width:225.5px;height:43.5px;box-sizing:border-box;border:1.8px solid rgba(55,53,47,0.14);border-radius:22px;background:#fff;"></div>
<svg style="position:absolute;left:648.3px;top:448.0px;" width="25" height="22" viewBox="0 0 25 22"><rect x="1" y="1" width="23" height="21" rx="2.2" fill="none" stroke="#787774" stroke-width="2.2"/><rect x="1" y="1" width="23" height="4.5" fill="#787774"/><circle cx="10.5" cy="9.5" r="0.95" fill="#787774"/><circle cx="14.5" cy="9.5" r="0.95" fill="#787774"/><circle cx="18.5" cy="9.5" r="0.95" fill="#787774"/><circle cx="6.5" cy="13.5" r="0.95" fill="#787774"/><circle cx="10.5" cy="13.5" r="0.95" fill="#787774"/><circle cx="14.5" cy="13.5" r="0.95" fill="#787774"/><circle cx="18.5" cy="13.5" r="0.95" fill="#787774"/><circle cx="6.5" cy="17.5" r="0.95" fill="#787774"/><circle cx="10.5" cy="17.5" r="0.95" fill="#787774"/><circle cx="14.5" cy="17.5" r="0.95" fill="#787774"/></svg>
<div class="t" style="left:686.00px;top:443.65px;font-size:25.2px;line-height:30.24px;color:#787774;letter-spacing:0.2px;-webkit-text-stroke:0.22px #787774;">Created on</div>
<svg style="position:absolute;left:821.8px;top:455px;" width="16" height="10" viewBox="0 0 16 10"><path d="M1.5 1.5 L8 8 L14.5 1.5" fill="none" stroke="#a5a4a0" stroke-width="2" stroke-linecap="round" stroke-linejoin="round"/></svg>
<div style="position:absolute;left:865.5px;top:436.8px;width:226.0px;height:43.5px;box-sizing:border-box;border:1.8px solid rgba(55,53,47,0.14);border-radius:22px;background:#fff;"></div>
<svg style="position:absolute;left:883.5px;top:449.5px;" width="28" height="19" viewBox="0 0 28 19"><ellipse cx="7.5" cy="5.2" rx="3.5" ry="3.9" fill="#787774"/><ellipse cx="19.1" cy="4.6" rx="3.9" ry="4.3" fill="#787774"/><path d="M0.3 18.9 C0.3 14 4 11 8.5 11 C10 11 11 11.2 11.6 11.4 C10.6 13 10.2 15 10.2 18.9 Z" fill="#787774"/><path d="M11 18.9 C11 14 14.5 10.8 19.1 10.8 C23.7 10.8 27.6 14 27.6 18.9 Z" fill="#787774"/></svg>
<div class="t" style="left:918.00px;top:443.65px;font-size:25.2px;line-height:30.24px;color:#787774;letter-spacing:0.2px;-webkit-text-stroke:0.22px #787774;">Teamspace</div>
<svg style="position:absolute;left:1057.5px;top:455px;" width="16" height="10" viewBox="0 0 16 10"><path d="M1.5 1.5 L8 8 L14.5 1.5" fill="none" stroke="#a5a4a0" stroke-width="2" stroke-linecap="round" stroke-linejoin="round"/></svg>
<div style="position:absolute;left:1102.5px;top:436.8px;width:231.0px;height:43.5px;box-sizing:border-box;border:1.8px solid rgba(55,53,47,0.14);border-radius:22px;background:#fff;"></div>
<svg style="position:absolute;left:1122px;top:448.0px;" width="21" height="22" viewBox="0 0 21 22"><circle cx="10.5" cy="5.8" r="5" fill="#787774"/><path d="M0.2 22 C0.2 17 4.5 13.5 10.5 13.5 C16.5 13.5 21 17 21 22 Z" fill="#787774"/></svg>
<div class="t" style="left:1154.50px;top:443.65px;font-size:25.2px;line-height:30.24px;color:#787774;letter-spacing:0.2px;-webkit-text-stroke:0.22px #787774;">Shared with</div>
<svg style="position:absolute;left:1299.5px;top:455px;" width="16" height="10" viewBox="0 0 16 10"><path d="M1.5 1.5 L8 8 L14.5 1.5" fill="none" stroke="#a5a4a0" stroke-width="2" stroke-linecap="round" stroke-linejoin="round"/></svg>
<div style="position:absolute;left:1344.5px;top:436.8px;width:202.0px;height:43.5px;box-sizing:border-box;border:1.8px solid rgba(55,53,47,0.14);border-radius:22px;background:#fff;"></div>
<svg style="position:absolute;left:1362.5px;top:449.5px;" width="28" height="19" viewBox="0 0 28 19"><ellipse cx="7.5" cy="5.2" rx="3.5" ry="3.9" fill="#787774"/><ellipse cx="19.1" cy="4.6" rx="3.9" ry="4.3" fill="#787774"/><path d="M0.3 18.9 C0.3 14 4 11 8.5 11 C10 11 11 11.2 11.6 11.4 C10.6 13 10.2 15 10.2 18.9 Z" fill="#787774"/><path d="M11 18.9 C11 14 14.5 10.8 19.1 10.8 C23.7 10.8 27.6 14 27.6 18.9 Z" fill="#787774"/></svg>
<div class="t" style="left:1396.50px;top:443.65px;font-size:25.2px;line-height:30.24px;color:#787774;letter-spacing:0.2px;-webkit-text-stroke:0.22px #787774;">Audience</div>
<svg style="position:absolute;left:1512.5px;top:455px;" width="16" height="10" viewBox="0 0 16 10"><path d="M1.5 1.5 L8 8 L14.5 1.5" fill="none" stroke="#a5a4a0" stroke-width="2" stroke-linecap="round" stroke-linejoin="round"/></svg>
<div style="position:absolute;left:630.5px;top:497.3px;width:220.5px;height:42.5px;box-sizing:border-box;border:1.8px solid #d6dadd;border-radius:22px;background:#fbfbfb;"></div>
<svg style="position:absolute;left:649.5px;top:507.5px;" width="21" height="22" viewBox="0 0 21 22"><circle cx="10.5" cy="5.8" r="5" fill="#2383e2"/><path d="M0.2 22 C0.2 17 4.5 13.5 10.5 13.5 C16.5 13.5 21 17 21 22 Z" fill="#2383e2"/></svg>
<div class="t" style="left:683.00px;top:503.65px;font-size:25.2px;line-height:30.24px;color:#2383e2;letter-spacing:0.2px;-webkit-text-stroke:0.22px #2383e2;">Created by</div>
<svg style="position:absolute;left:817px;top:515px;" width="16" height="10" viewBox="0 0 16 10"><path d="M1.5 1.5 L8 8 L14.5 1.5" fill="none" stroke="#2383e2" stroke-width="2" stroke-linecap="round" stroke-linejoin="round"/></svg>
<div style="position:absolute;left:630px;top:575px;width:1092px;height:535px;overflow:hidden;"><div style="position:absolute;left:0px;top:0px;width:1400px;height:1.8px;background:#e9e9e7;"></div>
<div style="position:absolute;left:0px;top:55px;width:1400px;height:1.8px;background:#e9e9e7;"></div>
<div style="position:absolute;left:610px;top:0px;width:1.8px;height:600px;background:#e9e9e7;"></div>
<div class="t" style="left:10.00px;top:15.46px;font-size:21.6px;line-height:25.92px;color:#787774;letter-spacing:0.3px;-webkit-text-stroke:0.22px #787774;">Page</div>
<div class="t" style="left:640.20px;top:15.46px;font-size:21.6px;line-height:25.92px;color:#787774;letter-spacing:0.5px;-webkit-text-stroke:0.22px #787774;">Location</div>
<div class="t" style="left:1024.50px;top:15.46px;font-size:21.6px;line-height:25.92px;color:#787774;letter-spacing:0.5px;-webkit-text-stroke:0.22px #787774;">Audience</div>
<svg style="position:absolute;left:15px;top:93.5px;" width="26" height="20" viewBox="0 0 26 20"><path d="M4.5 18 C1.3 18 0.6 12.8 4 11.6 C4 8 7.5 6.8 9.3 8.2 C10.5 3.3 17.2 2.3 19.2 7.5 C22.6 7.8 24.9 10.6 24.4 13.5 C24.9 16.6 23 18 21 18 Z" fill="#f6f6f6" stroke="#bfc4c9" stroke-width="1.1"/><path d="M3 16 C8 17.5 18 17.5 23.5 15.5 C23 17.5 22 18 21 18 H4.5 C3.8 18 3.3 17.3 3 16 Z" fill="#d9dde1"/></svg>
<div class="t" style="left:67.20px;top:75.45px;font-size:25.2px;line-height:30.24px;color:#37352f;letter-spacing:0.62px;-webkit-text-stroke:0.45px #37352f;">People Projects</div>
<div class="t" style="left:67.00px;top:110.16px;font-size:21.6px;line-height:25.92px;color:#9b9a97;letter-spacing:0.56px;-webkit-text-stroke:0.22px #9b9a97;">People</div>
<svg style="position:absolute;left:550px;top:99.1px;" width="28" height="8" viewBox="0 0 28 8"><circle cx="4" cy="4" r="2.9" fill="#a5a4a1"/><circle cx="14" cy="4" r="2.9" fill="#a5a4a1"/><circle cx="24" cy="4" r="2.9" fill="#a5a4a1"/></svg>
<div style="position:absolute;left:635.3px;top:82.2px;width:43.5px;height:42.5px;background:#e3e2e0;border-radius:7px;"></div>
<svg style="position:absolute;left:632px;top:80.0px;" width="50" height="50" viewBox="0 0 50 50"><circle cx="25" cy="19" r="5.2" fill="#4b4a47"/><circle cx="25" cy="12.6" r="3.6" fill="#4b4a47"/><circle cx="19.6" cy="17.3" r="3.6" fill="#4b4a47"/><circle cx="30.4" cy="17.3" r="3.6" fill="#4b4a47"/><circle cx="21.7" cy="23.2" r="3.6" fill="#4b4a47"/><circle cx="28.3" cy="23.2" r="3.6" fill="#4b4a47"/><circle cx="25" cy="19.6" r="1.9" fill="#e3e2e0"/><rect x="24" y="25" width="2.1" height="11" fill="#4b4a47"/><path d="M15.8 29.2 H19.6 L25 34.3 L30.4 29.2 H34.2 L27 37.6 H23 Z" fill="#4b4a47"/></svg>
<div class="t" style="left:696.50px;top:89.35px;font-size:25.2px;line-height:30.24px;color:#37352f;letter-spacing:0.3px;-webkit-text-stroke:0.22px #37352f;">People</div>
<div class="t" style="left:1023.80px;top:89.15px;font-size:25.2px;line-height:30.24px;color:#37352f;-webkit-text-stroke:0.22px #37352f;">Share</div>
<svg style="position:absolute;left:15px;top:183.3px;" width="26" height="26" viewBox="0 0 26 26"><path d="M1 4 L25 6.5" stroke="#555" stroke-width="1.4"/><path d="M8 4.2 H17 L16 6 H9 Z" fill="#444"/><path d="M12.5 6 V10" stroke="#444" stroke-width="1.5"/><rect x="7" y="10" width="12" height="15" rx="1" fill="#f2b824"/><rect x="8" y="11" width="10" height="9.5" fill="#3a3a3a"/><path d="M11 11 V20.5 M15 11 V20.5" stroke="#777" stroke-width="0.8"/></svg>
<div class="t" style="left:67.20px;top:168.25px;font-size:25.2px;line-height:30.24px;color:#37352f;letter-spacing:0.62px;-webkit-text-stroke:0.45px #37352f;">People Tasks</div>
<div class="t" style="left:67.00px;top:202.96px;font-size:21.6px;line-height:25.92px;color:#9b9a97;letter-spacing:0.56px;-webkit-text-stroke:0.22px #9b9a97;">People</div>
<svg style="position:absolute;left:550px;top:191.9px;" width="28" height="8" viewBox="0 0 28 8"><circle cx="4" cy="4" r="2.9" fill="#a5a4a1"/><circle cx="14" cy="4" r="2.9" fill="#a5a4a1"/><circle cx="24" cy="4" r="2.9" fill="#a5a4a1"/></svg>
<div style="position:absolute;left:635.3px;top:175.0px;width:43.5px;height:42.5px;background:#e3e2e0;border-radius:7px;"></div>
<svg style="position:absolute;left:632px;top:172.8px;" width="50" height="50" viewBox="0 0 50 50"><circle cx="25" cy="19" r="5.2" fill="#4b4a47"/><circle cx="25" cy="12.6" r="3.6" fill="#4b4a47"/><circle cx="19.6" cy="17.3" r="3.6" fill="#4b4a47"/><circle cx="30.4" cy="17.3" r="3.6" fill="#4b4a47"/><circle cx="21.7" cy="23.2" r="3.6" fill="#4b4a47"/><circle cx="28.3" cy="23.2" r="3.6" fill="#4b4a47"/><circle cx="25" cy="19.6" r="1.9" fill="#e3e2e0"/><rect x="24" y="25" width="2.1" height="11" fill="#4b4a47"/><path d="M15.8 29.2 H19.6 L25 34.3 L30.4 29.2 H34.2 L27 37.6 H23 Z" fill="#4b4a47"/></svg>
<div class="t" style="left:696.50px;top:182.15px;font-size:25.2px;line-height:30.24px;color:#37352f;letter-spacing:0.3px;-webkit-text-stroke:0.22px #37352f;">People</div>
<div class="t" style="left:1023.80px;top:181.95px;font-size:25.2px;line-height:30.24px;color:#37352f;-webkit-text-stroke:0.22px #37352f;">Share</div>
<svg style="position:absolute;left:15px;top:280.6px;" width="25" height="16" viewBox="0 0 25 16"><rect x="0" y="0" width="24.4" height="15.7" fill="#ebebeb"/><path d="M0 15.7 L12.2 6.5 L24.4 15.7 Z" fill="#d5d8dc"/><path d="M0.3 0.3 L12.2 10 L24.1 0.3" fill="none" stroke="#c9c9c9" stroke-width="0.8"/><path d="M12.2 13.6 C5.3 9 5.8 2.2 9.2 2 C10.8 1.9 11.8 3 12.2 4 C12.6 3 13.6 1.9 15.2 2 C18.6 2.2 19.1 9 12.2 13.6 Z" fill="#f24b4b" stroke="#6b3a3a" stroke-width="0.5"/></svg>
<div class="t" style="left:67.20px;top:261.05px;font-size:25.2px;line-height:30.24px;color:#37352f;letter-spacing:0.62px;-webkit-text-stroke:0.45px #37352f;">Employee Engagement Survey</div>
<div class="t" style="left:67.00px;top:295.76px;font-size:21.6px;line-height:25.92px;color:#9b9a97;letter-spacing:0.56px;-webkit-text-stroke:0.22px #9b9a97;">People/People Projects</div>
<svg style="position:absolute;left:550px;top:284.7px;" width="28" height="8" viewBox="0 0 28 8"><circle cx="4" cy="4" r="2.9" fill="#a5a4a1"/><circle cx="14" cy="4" r="2.9" fill="#a5a4a1"/><circle cx="24" cy="4" r="2.9" fill="#a5a4a1"/></svg>
<div style="position:absolute;left:635.3px;top:267.8px;width:43.5px;height:42.5px;background:#e3e2e0;border-radius:7px;"></div>
<svg style="position:absolute;left:632px;top:265.6px;" width="50" height="50" viewBox="0 0 50 50"><circle cx="25" cy="19" r="5.2" fill="#4b4a47"/><circle cx="25" cy="12.6" r="3.6" fill="#4b4a47"/><circle cx="19.6" cy="17.3" r="3.6" fill="#4b4a47"/><circle cx="30.4" cy="17.3" r="3.6" fill="#4b4a47"/><circle cx="21.7" cy="23.2" r="3.6" fill="#4b4a47"/><circle cx="28.3" cy="23.2" r="3.6" fill="#4b4a47"/><circle cx="25" cy="19.6" r="1.9" fill="#e3e2e0"/><rect x="24" y="25" width="2.1" height="11" fill="#4b4a47"/><path d="M15.8 29.2 H19.6 L25 34.3 L30.4 29.2 H34.2 L27 37.6 H23 Z" fill="#4b4a47"/></svg>
<div class="t" style="left:696.50px;top:274.95px;font-size:25.2px;line-height:30.24px;color:#37352f;letter-spacing:0.3px;-webkit-text-stroke:0.22px #37352f;">People</div>
<div class="t" style="left:1023.80px;top:274.75px;font-size:25.2px;line-height:30.24px;color:#37352f;-webkit-text-stroke:0.22px #37352f;">Share</div>
<svg style="position:absolute;left:15px;top:370.2px;" width="25" height="25" viewBox="0 0 25 25"><path d="M0 0 H24 V11.8 H12 V24.4 H0 Z" fill="#a7a6a2"/><path d="M14.3 14.8 H24 L14.3 24.4 Z" fill="#a7a6a2"/></svg>
<div class="t" style="left:67.20px;top:353.85px;font-size:25.2px;line-height:30.24px;color:#37352f;letter-spacing:0.62px;-webkit-text-stroke:0.45px #37352f;">Plan for Running Interviewer Training</div>
<div class="t" style="left:67.00px;top:388.56px;font-size:21.6px;line-height:25.92px;color:#9b9a97;letter-spacing:0.56px;-webkit-text-stroke:0.22px #9b9a97;">People/People Tasks</div>
<svg style="position:absolute;left:550px;top:377.5px;" width="28" height="8" viewBox="0 0 28 8"><circle cx="4" cy="4" r="2.9" fill="#a5a4a1"/><circle cx="14" cy="4" r="2.9" fill="#a5a4a1"/><circle cx="24" cy="4" r="2.9" fill="#a5a4a1"/></svg>
<div style="position:absolute;left:635.3px;top:360.6px;width:43.5px;height:42.5px;background:#e3e2e0;border-radius:7px;"></div>
<svg style="position:absolute;left:632px;top:358.4px;" width="50" height="50" viewBox="0 0 50 50"><circle cx="25" cy="19" r="5.2" fill="#4b4a47"/><circle cx="25" cy="12.6" r="3.6" fill="#4b4a47"/><circle cx="19.6" cy="17.3" r="3.6" fill="#4b4a47"/><circle cx="30.4" cy="17.3" r="3.6" fill="#4b4a47"/><circle cx="21.7" cy="23.2" r="3.6" fill="#4b4a47"/><circle cx="28.3" cy="23.2" r="3.6" fill="#4b4a47"/><circle cx="25" cy="19.6" r="1.9" fill="#e3e2e0"/><rect x="24" y="25" width="2.1" height="11" fill="#4b4a47"/><path d="M15.8 29.2 H19.6 L25 34.3 L30.4 29.2 H34.2 L27 37.6 H23 Z" fill="#4b4a47"/></svg>
<div class="t" style="left:696.50px;top:367.75px;font-size:25.2px;line-height:30.24px;color:#37352f;letter-spacing:0.3px;-webkit-text-stroke:0.22px #37352f;">People</div>
<div class="t" style="left:1023.80px;top:367.55px;font-size:25.2px;line-height:30.24px;color:#37352f;-webkit-text-stroke:0.22px #37352f;">Share</div>
<svg style="position:absolute;left:15px;top:463.0px;" width="25" height="25" viewBox="0 0 25 25"><path d="M0 0 H24 V11.8 H12 V24.4 H0 Z" fill="#a7a6a2"/><path d="M14.3 14.8 H24 L14.3 24.4 Z" fill="#a7a6a2"/></svg>
<div class="t" style="left:67.20px;top:446.65px;font-size:25.2px;line-height:30.24px;color:#37352f;letter-spacing:0.62px;-webkit-text-stroke:0.45px #37352f;">Run interviewer training session</div>
<div class="t" style="left:67.00px;top:481.36px;font-size:21.6px;line-height:25.92px;color:#9b9a97;letter-spacing:0.56px;-webkit-text-stroke:0.22px #9b9a97;">People/People Tasks</div>
<svg style="position:absolute;left:550px;top:470.3px;" width="28" height="8" viewBox="0 0 28 8"><circle cx="4" cy="4" r="2.9" fill="#a5a4a1"/><circle cx="14" cy="4" r="2.9" fill="#a5a4a1"/><circle cx="24" cy="4" r="2.9" fill="#a5a4a1"/></svg>
<div style="position:absolute;left:635.3px;top:453.4px;width:43.5px;height:42.5px;background:#e3e2e0;border-radius:7px;"></div>
<svg style="position:absolute;left:632px;top:451.2px;" width="50" height="50" viewBox="0 0 50 50"><circle cx="25" cy="19" r="5.2" fill="#4b4a47"/><circle cx="25" cy="12.6" r="3.6" fill="#4b4a47"/><circle cx="19.6" cy="17.3" r="3.6" fill="#4b4a47"/><circle cx="30.4" cy="17.3" r="3.6" fill="#4b4a47"/><circle cx="21.7" cy="23.2" r="3.6" fill="#4b4a47"/><circle cx="28.3" cy="23.2" r="3.6" fill="#4b4a47"/><circle cx="25" cy="19.6" r="1.9" fill="#e3e2e0"/><rect x="24" y="25" width="2.1" height="11" fill="#4b4a47"/><path d="M15.8 29.2 H19.6 L25 34.3 L30.4 29.2 H34.2 L27 37.6 H23 Z" fill="#4b4a47"/></svg>
<div class="t" style="left:696.50px;top:460.55px;font-size:25.2px;line-height:30.24px;color:#37352f;letter-spacing:0.3px;-webkit-text-stroke:0.22px #37352f;">People</div>
<div class="t" style="left:1023.80px;top:460.35px;font-size:25.2px;line-height:30.24px;color:#37352f;-webkit-text-stroke:0.22px #37352f;">Share</div>
</div>

</div></div>
</div>
<div style="position:absolute;left:0;top:0;width:1920px;height:1200px;border-radius:22px;box-shadow:inset 0 1px 0 rgba(255,255,255,0.45);pointer-events:none;"></div>
</body></html>
